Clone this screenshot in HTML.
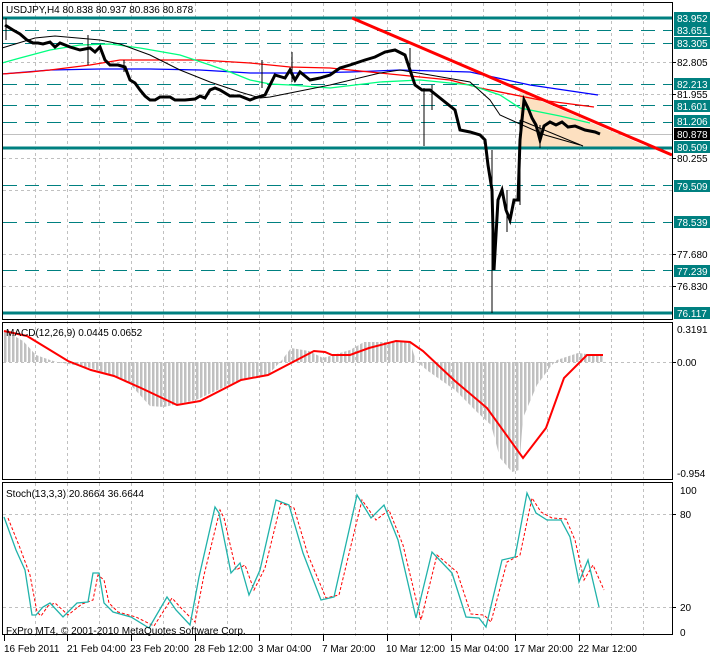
<!DOCTYPE html>
<html><head><meta charset="utf-8"><style>
html,body{margin:0;padding:0;background:#fff;}
svg{display:block;font-family:"Liberation Sans",sans-serif;}
</style></head><body>
<svg width="710" height="656" viewBox="0 0 710 656" xmlns="http://www.w3.org/2000/svg">
<defs>
<pattern id="bars" width="4" height="10" patternUnits="userSpaceOnUse"><rect x="0" y="0" width="2.5" height="10" fill="#c0c0c0"/></pattern>
</defs>
<rect width="710" height="656" fill="#fff"/>
<!-- vertical grid -->
<g stroke="#c0c0c0" stroke-dasharray="3,3" stroke-width="1">
<path d="M35.5 3V636M67.5 3V636M99.5 3V636M131.5 3V636M163.5 3V636M195.5 3V636M227.5 3V636M259.5 3V636M291.5 3V636M323.5 3V636M355.5 3V636M387.5 3V636M419.5 3V636M451.5 3V636M483.5 3V636M515.5 3V636M547.5 3V636M579.5 3V636M611.5 3V636M643.5 3V636"/>
<path d="M3 62.5H672M3 94.5H672M3 158.5H672M3 190.5H672M3 254.5H672M3 286.5H672M3 362.5H672M3 514.5H672M3 607.5H672"/>
</g>
<line x1="3" y1="134.5" x2="672" y2="134.5" stroke="#c0c0c0"/>
<!-- teal levels -->
<g stroke="#008080" stroke-width="1" stroke-dasharray="14,8">
<path d="M3 30.5H672M3 43.5H672M3 84.5H672M3 105.5H672M3 122.5H672M3 185.5H672M3 222.5H672M3 270.5H672"/>
</g>
<!-- triangle fill -->
<polygon points="520,92 650,148 520,148" fill="#fde0c0"/>
<g stroke="#008080" stroke-width="3">
<path d="M3 18H672M3 148H672M3 313H672"/>
</g>
<!-- MAs -->
<polyline fill="none" stroke="#0000ff" stroke-width="1.3" points="2,74 50,70 100,69 150,69 200,70 250,73 300,73 350,72 400,70 470,72 530,85 598,95"/>
<polyline fill="none" stroke="#ff0000" stroke-width="1.3" points="2,74 30,72 50,70 90,65 120,60 200,60 250,63 290,67 330,68 400,75 450,80 480,88 540,100 594,107"/>
<polyline fill="none" stroke="#00ff7f" stroke-width="1.3" points="2,63 20,58 50,50 80,45 110,44 140,48 180,55 210,65 230,72 250,80 270,84 290,85 330,88 380,82 420,80 470,85 500,95 520,108 560,116 590,123"/>
<polyline fill="none" stroke="#000" stroke-width="1" points="2,48 35,38 55,36 100,40 120,44 150,55 180,70 210,82 240,92 260,98 270,97 290,93 330,85 380,73 400,70 430,75 470,82 490,100 500,115 520,124 545,135 580,145"/>
<!-- price -->
<polyline fill="none" stroke="#000" stroke-width="3" points="5,25 13,30 20,34 27,40 33,43 38,43 43,44 50,42 55,47 60,43 70,47 80,50 90,48 95,52 100,47 105,60 110,65 118,65 125,67 130,80 135,83 140,90 145,96 150,100 155,100 160,97 170,97 175,100 185,100 195,99 200,96 205,98 210,90 215,88 220,90 230,96 240,96 250,100 255,98 265,95 270,85 275,75 285,78 290,70 295,80 300,72 310,80 320,78 330,75 340,68 350,65 365,60 375,57 385,52 395,50 405,55 410,70 415,85 422,90 430,90 440,98 455,110 460,130 470,132 480,135 485,140 488,165 492,190 494,270 498,200 502,190 506,210 510,220 514,200 518,200 520,140 524,100 528,108 532,118 536,125 540,140 544,126 550,122 556,125 562,122 568,127 575,126 585,130 595,132 600,134"/>
<g stroke="#000" stroke-width="1">
<path d="M424 88V146M492 150V313M88 35V65M262 60V88M292 52V82M540 125V148M432 85V110M507 190V232M520 120V205M6 18V40M410 48V70M124 60V72"/>
</g>
<!-- trendline -->
<line x1="352" y1="18" x2="672" y2="155" stroke="#ff0000" stroke-width="3"/>
<line x1="520" y1="120" x2="583" y2="146" stroke="#000" stroke-width="1"/>
<text x="6" y="13" font-size="10" fill="#000">USDJPY,H4  80.838 80.937 80.836 80.878</text>
<!-- MACD -->
<polygon fill="url(#bars)" points="4,330 23,341 36,355 50,360 57,362 91,368 127,381 150,406 164,407 196,400 237,381 268,375 282,360 291,348 309,351 323,358 350,350 364,342 410,342 416,361 428,371 455,390 478,413 491,425 500,458 512,472 519,470 523,418 537,385 551,366 557,360 578,353 603,356 603,362 4,362"/>
<polyline fill="none" stroke="#ff0000" stroke-width="2" points="4,331 27,336 68,361 91,370 114,376 141,388 177,405 200,401 241,380 268,375 291,363 314,351 325,352 332,355 350,355 369,348 396,341 410,342 423,351 455,381 487,408 523,458 546,428 564,378 587,355 603,355"/>
<text x="6" y="336" font-size="10" fill="#000">MACD(12,26,9) 0.0445 0.0652</text>
<!-- Stoch -->
<polyline fill="none" stroke="#ff0000" stroke-width="1" stroke-dasharray="3,2" points="8,518 20,548 30,575 37,612 41,616 48,606 55,603 68,615 82,604 93,600 98,575 104,580 109,603 118,612 136,617 154,626 172,598 181,608 195,622 204,575 220,510 224,518 236,570 245,565 254,590 265,568 281,503 294,508 308,555 326,598 339,595 362,500 376,520 389,510 403,545 421,620 437,555 457,572 471,614 484,615 491,622 507,562 520,555 532,498 541,512 552,518 566,519 575,540 584,580 593,565 604,590"/>
<polyline fill="none" stroke="#20b2aa" stroke-width="1.3" points="4,517 16,550 25,570 32,615 36,615 43,607 50,603 63,617 77,603 88,602 93,573 99,573 104,603 113,612 131,617 149,628 167,597 176,610 190,625 199,577 215,507 219,513 231,573 240,563 249,595 260,570 276,500 289,505 303,553 321,600 334,597 357,495 371,518 384,505 398,540 416,618 432,552 452,573 466,617 479,618 486,627 502,560 515,557 527,493 536,513 547,520 561,520 570,537 579,582 588,560 599,607"/>
<text x="6" y="497" font-size="10" fill="#000">Stoch(13,3,3) 20.8664 36.6644</text>
<text x="6" y="634" font-size="10" fill="#000">FxPro MT4, © 2001-2010 MetaQuotes Software Corp.</text>
<!-- panel borders -->
<g fill="none" stroke="#000" stroke-width="1">
<rect x="2.5" y="2.5" width="670" height="317"/>
<rect x="2.5" y="322.5" width="670" height="157"/>
<rect x="2.5" y="482.5" width="670" height="152"/>
</g>
<!-- ticks bottom -->
<g stroke="#000"><path d="M4.5 635V641M67.5 635V641M131.5 635V641M195.5 635V641M259.5 635V641M323.5 635V641M387.5 635V641M451.5 635V641M515.5 635V641M579.5 635V641"/></g>
<g font-size="10" fill="#000">
<text x="4" y="652">16 Feb 2011</text><text x="67" y="652">21 Feb 04:00</text><text x="130" y="652">23 Feb 20:00</text><text x="194" y="652">28 Feb 12:00</text><text x="258" y="652">3 Mar 04:00</text><text x="322" y="652">7 Mar 20:00</text><text x="386" y="652">10 Mar 12:00</text><text x="450" y="652">15 Mar 04:00</text><text x="514" y="652">17 Mar 20:00</text><text x="578" y="652">22 Mar 12:00</text>
</g>
<!-- right axis -->
<g fill="#008080">
<rect x="674" y="12" width="36" height="12"/><rect x="674" y="24" width="36" height="12"/><rect x="674" y="37" width="36" height="12"/>
<rect x="674" y="78" width="36" height="12"/><rect x="674" y="100" width="36" height="12"/><rect x="674" y="115" width="36" height="12"/>
<rect x="674" y="141" width="36" height="12"/><rect x="674" y="180" width="36" height="12"/><rect x="674" y="216" width="36" height="12"/>
<rect x="674" y="265" width="36" height="12"/><rect x="674" y="307" width="36" height="12"/>
</g>
<rect x="674" y="128" width="36" height="12" fill="#000"/>
<g font-size="10" fill="#fff">
<text x="677" y="22">83.952</text><text x="677" y="34">83.651</text><text x="677" y="47">83.305</text>
<text x="677" y="88">82.213</text><text x="677" y="110">81.601</text><text x="677" y="125">81.206</text>
<text x="677" y="138">80.878</text><text x="677" y="151">80.509</text><text x="677" y="190">79.509</text>
<text x="677" y="226">78.539</text><text x="677" y="275">77.239</text><text x="677" y="317">76.117</text>
</g>
<g font-size="10" fill="#000">
<text x="677" y="66">82.805</text><text x="677" y="98">81.955</text><text x="677" y="162">80.255</text>
<text x="677" y="258">77.680</text><text x="677" y="290">76.830</text>
<text x="677" y="333">0.3191</text><text x="677" y="366">0.00</text><text x="677" y="477">-0.954</text>
<text x="680" y="494">100</text><text x="680" y="518">80</text><text x="680" y="611">20</text><text x="680" y="636">0</text>
</g>
<g stroke="#000"><path d="M672 62.5H676M672 94.5H676M672 158.5H676M672 254.5H676M672 286.5H676M672 362.5H676M672 514.5H676M672 607.5H676"/></g>
</svg>
</body></html>
